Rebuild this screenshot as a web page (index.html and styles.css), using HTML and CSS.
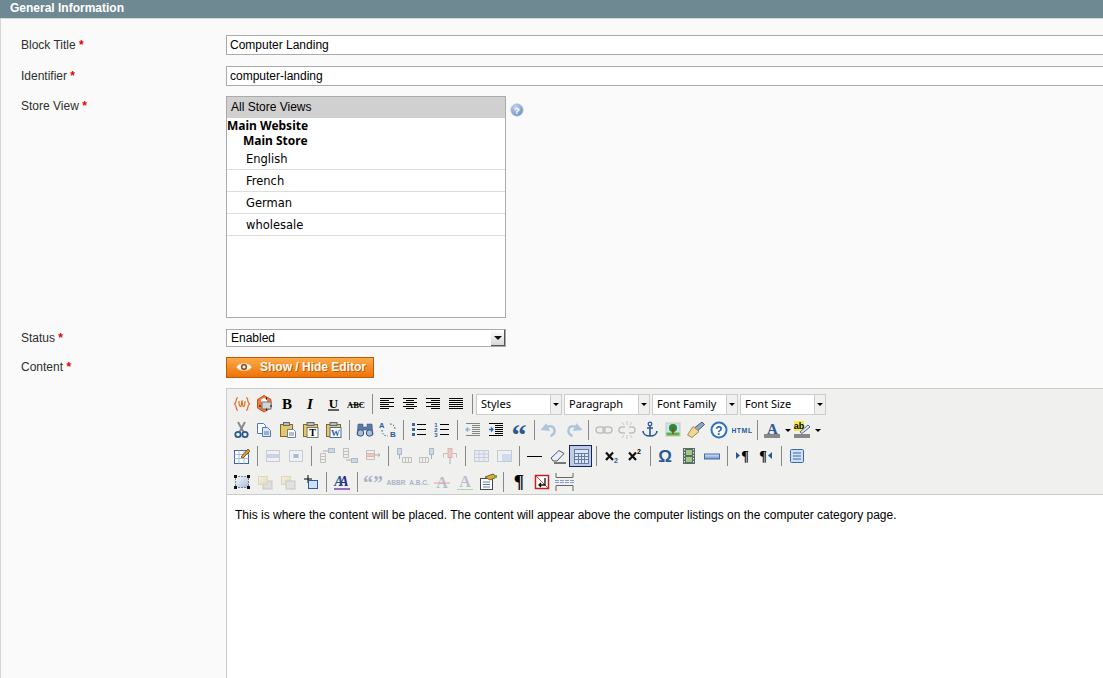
FILE: index.html
```html
<!DOCTYPE html>
<html lang="en">
<head>
    <meta charset="UTF-8">
    <meta name="viewport" content="width=device-width, initial-scale=1.0">
    <title>General Information</title>
    <link rel="stylesheet" href="styles.css">
</head>
<body>
    <svg class="defs" width="0" height="0">
        <defs>
            <linearGradient id="blueFill" x1="0" y1="0" x2="0" y2="1"><stop offset="0" stop-color="#dbe8f7"/><stop offset="1" stop-color="#6f94c8"/></linearGradient>
            <linearGradient id="layerFill" x1="0" y1="0" x2="1" y2="1"><stop offset="0" stop-color="#f8fafd"/><stop offset="1" stop-color="#a5bcdc"/></linearGradient>
            <linearGradient id="paleFill" x1="0" y1="0" x2="1" y2="1"><stop offset="0" stop-color="#f8f4df"/><stop offset="1" stop-color="#d9cfa4"/></linearGradient>
            <radialGradient id="helpFill" cx="0.4" cy="0.3" r="0.8"><stop offset="0" stop-color="#c8d8f0"/><stop offset="1" stop-color="#5f84bc"/></radialGradient>

            <!-- row 1 -->
            <symbol id="i-widget" viewBox="0 0 20 20"><path d="M6 3.500C3.500 3.500 5 8.500 2.500 10C5 11.500 3.500 16.500 6 16.500M14 3.500C16.500 3.500 15 8.500 17.500 10C15 11.500 16.500 16.500 14 16.500M7 7C7 10 7.800 12.500 8.600 12.500C9.500 12.500 9.500 8.500 10 6.500C10.500 8.500 10.500 12.500 11.400 12.500C12.200 12.500 13 10 13 7" fill="none" stroke="#e86a20" stroke-width="1.200"/></symbol>
            <symbol id="i-image-mage" viewBox="0 0 20 20"><path d="M9 1.500L16 5.500V14L9 18L2.500 14V5.500Z" fill="#ee7a3c" stroke="#c9521b"/><path d="M6 5.500L9 4L12 5.500V8H6Z" fill="#fff"/><rect x="7" y="8" width="9" height="7" fill="#cfd3da" stroke="#777"/><path d="M11.500 3.500v15M4 12h15" stroke="#111" stroke-width="1" stroke-dasharray="2 9"/></symbol>
            <symbol id="i-bold" viewBox="0 0 20 20"><text x="9" y="15" text-anchor="middle" class="ic-serif" font-size="15" font-weight="700">B</text></symbol>
            <symbol id="i-italic" viewBox="0 0 20 20"><text x="9" y="15" text-anchor="middle" class="ic-serif" font-size="15" font-weight="700" font-style="italic">I</text></symbol>
            <symbol id="i-underline" viewBox="0 0 20 20"><text x="9.500" y="14" text-anchor="middle" class="ic-serif" font-size="13" font-weight="700">U</text><path d="M4 16h11" stroke="#000" stroke-width="1.200"/></symbol>
            <symbol id="i-strike" viewBox="0 0 20 20"><text x="9" y="13.500" text-anchor="middle" class="ic-serif" font-size="8.500">ABC</text><path d="M2 10.500h14" stroke="#000" stroke-width=".7"/></symbol>
            <symbol id="i-left" viewBox="0 0 20 20"><path d="M2 4.500h14M2 6.500h9M2 8.500h14M2 10.500h9M2 12.500h14M2 14.500h9" stroke="#000"/></symbol>
            <symbol id="i-center" viewBox="0 0 20 20"><path d="M2 4.500h14M5 6.500h8M2 8.500h14M5 10.500h8M2 12.500h14M5 14.500h8" stroke="#000"/></symbol>
            <symbol id="i-right" viewBox="0 0 20 20"><path d="M2 4.500h14M7 6.500h9M2 8.500h14M7 10.500h9M2 12.500h14M7 14.500h9" stroke="#000"/></symbol>
            <symbol id="i-justify" viewBox="0 0 20 20"><path d="M2 4.500h14M2 6.500h14M2 8.500h14M2 10.500h14M2 12.500h14M2 14.500h14" stroke="#000"/></symbol>

            <!-- row 2 -->
            <symbol id="i-cut" viewBox="0 0 20 20"><path d="M6 2L11.500 12M13 2L7.500 12" stroke="#8a8a8a" stroke-width="2"/><circle cx="6" cy="14.500" r="2.700" fill="none" stroke="#2a5a94" stroke-width="1.800"/><circle cx="13" cy="14.500" r="2.700" fill="none" stroke="#2a5a94" stroke-width="1.800"/></symbol>
            <symbol id="i-copy" viewBox="0 0 20 20"><path d="M2.500 3.500h6l2 2v8h-8z" fill="#fff" stroke="#4d7ab5"/><path d="M7.500 7.500h5l3 3v6h-8z" fill="#dce8f6" stroke="#4d7ab5"/><path d="M9 12h5M9 14h5" stroke="#4d7ab5"/></symbol>
            <symbol id="i-paste" viewBox="0 0 20 20"><rect x="2.500" y="4.500" width="12" height="12" fill="#e6c868" stroke="#7c6a2c"/><rect x="5.500" y="2.500" width="6" height="3" fill="#bbb" stroke="#666"/><path d="M9.500 9.500h6l2 2v6h-8z" fill="#fff" stroke="#6a7f9e"/><path d="M11 13h5M11 15h5" stroke="#6a7f9e"/></symbol>
            <symbol id="i-paste-text" viewBox="0 0 20 20"><rect x="2.500" y="4.500" width="14" height="12" fill="#e6c868" stroke="#7c6a2c"/><rect x="6" y="2.500" width="7" height="3" fill="#bbb" stroke="#666"/><rect x="6" y="7.500" width="11" height="10" fill="#fff" stroke="#777"/><text x="11.500" y="16" text-anchor="middle" class="ic-serif" font-size="10" font-weight="700">T</text></symbol>
            <symbol id="i-paste-word" viewBox="0 0 20 20"><rect x="2.500" y="4.500" width="14" height="12" fill="#e6c868" stroke="#7c6a2c"/><rect x="6" y="2.500" width="7" height="3" fill="#bbb" stroke="#666"/><rect x="6" y="7.500" width="11" height="10" fill="#fff" stroke="#3d6cb0"/><text x="11.500" y="16" text-anchor="middle" class="ic-serif" font-size="9" font-weight="700" fill="#2a5a9e">W</text></symbol>
            <symbol id="i-search" viewBox="0 0 20 20"><path d="M3 4h5v3h4V4h5l1 11h-6V10H8v5H2z" fill="#5a7aa6" stroke="#33507a" stroke-width=".5"/><circle cx="5.500" cy="13" r="3.200" fill="#a8c0de" stroke="#33507a"/><circle cx="14.500" cy="13" r="3.200" fill="#a8c0de" stroke="#33507a"/></symbol>
            <symbol id="i-replace" viewBox="0 0 20 20"><text x="1" y="8" class="ic-sans" font-size="7.500" fill="#2e5c9a">A</text><text x="12" y="17" class="ic-sans" font-size="8" fill="#2e5c9a">B</text><path d="M4 10C4 14 6 16 10 16M12 4C15 4 17 6 17 9" fill="none" stroke="#2e5c9a" stroke-dasharray="1.500 1.500"/></symbol>
            <symbol id="i-bullist" viewBox="0 0 20 20"><path d="M8 4.500h9M8 9.500h9M8 14.500h9" stroke="#000"/><path d="M3 3h3v3H3zM3 8h3v3H3zM3 13h3v3H3z" fill="#3c68a8"/></symbol>
            <symbol id="i-numlist" viewBox="0 0 20 20"><path d="M8 4.500h9M8 9.500h9M8 14.500h9" stroke="#000"/><text x="4" y="7" text-anchor="middle" class="ic-sans" font-size="6" font-weight="700" fill="#2e5c9a">1</text><text x="4" y="12" text-anchor="middle" class="ic-sans" font-size="6" font-weight="700" fill="#2e5c9a">2</text><text x="4" y="17" text-anchor="middle" class="ic-sans" font-size="6" font-weight="700" fill="#2e5c9a">3</text></symbol>
            <symbol id="i-outdent" viewBox="0 0 20 20"><path d="M3 3.500h14M9 5.500h8M9 7.500h8M9 9.500h8M9 11.500h8M9 13.500h8M3 15.500h14" stroke="#000"/><path d="M7 9.500H3M5 7.500L3 9.500l2 2" fill="none" stroke="#2e6ab5" stroke-width="1.300"/></symbol>
            <symbol id="i-indent" viewBox="0 0 20 20"><path d="M3 3.500h14M9 5.500h8M9 7.500h8M9 9.500h8M9 11.500h8M9 13.500h8M3 15.500h14" stroke="#000"/><path d="M3 9.500h4M5 7.500l2 2-2 2" fill="none" stroke="#2e6ab5" stroke-width="1.300"/></symbol>
            <symbol id="i-quote" viewBox="0 0 20 20"><text x="10" y="25" text-anchor="middle" class="ic-serif" font-size="30" font-weight="700" fill="#2a5a94">“</text></symbol>
            <symbol id="i-undo" viewBox="0 0 20 20"><path d="M6 5.500L3 9l5 .500zM5.500 8C9 5 14 6 14.500 10C15 13 13 15 10.500 16" fill="none" stroke="#5f8fc8" stroke-width="2.500"/></symbol>
            <symbol id="i-redo" viewBox="0 0 20 20"><path d="M14 5.500L17 9l-5 .500zM14.500 8C11 5 6 6 5.500 10C5 13 7 15 9.500 16" fill="none" stroke="#5f8fc8" stroke-width="2.500"/></symbol>
            <symbol id="i-link" viewBox="0 0 20 20"><rect x="2" y="7" width="9" height="6" rx="3" fill="none" stroke="#888" stroke-width="1.500"/><rect x="9" y="7" width="9" height="6" rx="3" fill="none" stroke="#888" stroke-width="1.500"/></symbol>
            <symbol id="i-unlink" viewBox="0 0 20 20"><path d="M8 7H5a3 3 0 0 0 0 6h3M12 7h3a3 3 0 0 1 0 6h-3" fill="none" stroke="#888" stroke-width="1.500"/><path d="M10 1v4M10 15v4M5 2l2 3M15 2l-2 3M5 18l2-3M15 18l-2-3" stroke="#999"/></symbol>
            <symbol id="i-anchor" viewBox="0 0 20 20"><circle cx="10" cy="4" r="1.800" fill="none" stroke="#2a5a94" stroke-width="1.300"/><path d="M10 6v10M7 8h6M3 11c0 3 3 5 7 5s7-2 7-5" fill="none" stroke="#2a5a94" stroke-width="1.600"/></symbol>
            <symbol id="i-picture" viewBox="0 0 20 20"><rect x="3" y="3" width="14" height="13" fill="#c8e4f5" stroke="#c8c8b8"/><path d="M3.500 12.500h13v3h-13z" fill="#5fb040"/><circle cx="10" cy="8" r="4" fill="#2f8a2f"/><path d="M10 8v6" stroke="#7a4a20" stroke-width="1.500"/></symbol>
            <symbol id="i-cleanup" viewBox="0 0 20 20"><path d="M1.500 15L7 6.500L13 11.500L6 17.500Z" fill="#f0d890" stroke="#a08a50"/><path d="M9 7.500L16 2L18.500 4.500L12 10.500" fill="#8fa6c4" stroke="#445a7a"/></symbol>
            <symbol id="i-help" viewBox="0 0 20 20"><circle cx="10" cy="10" r="7.500" fill="#fff" stroke="#2e72c8" stroke-width="2"/><text x="10" y="14.500" text-anchor="middle" class="ic-sans" font-size="12" font-weight="700" fill="#2460ae">?</text></symbol>
            <symbol id="i-html" viewBox="0 0 20 20"><text x="10" y="13" text-anchor="middle" class="ic-sans" font-size="7" font-weight="700" fill="#2a5a94" letter-spacing=".5">HTML</text></symbol>
            <symbol id="i-forecolor" viewBox="0 0 20 20"><text x="9.500" y="13.500" text-anchor="middle" class="ic-serif" font-size="15" font-weight="700" fill="#2a5a94">A</text><rect x="1" y="14" width="16" height="4" fill="#888"/></symbol>
            <symbol id="i-backcolor" viewBox="0 0 20 20"><rect x="1" y="1" width="10" height="10" fill="#f2ea4e"/><text x="6" y="9" text-anchor="middle" class="ic-sans" font-size="9">ab</text><path d="M7 12L15 5L17 7L9 13.500Z" fill="#dfe8f4" stroke="#5a6a88"/><rect x="1" y="14" width="16" height="4" fill="#888"/></symbol>

            <!-- row 3 -->
            <symbol id="i-table-props" viewBox="0 0 20 20"><rect x="2.500" y="4.500" width="14" height="13" fill="#fff" stroke="#3c68a8"/><path d="M2.500 8.500h14M2.500 12.500h14M7 4.500v13M12 4.500v13" stroke="#a8bedc"/><path d="M9 11L16 3l2 2-7 7z" fill="#e09a40" stroke="#8a5a20"/></symbol>
            <symbol id="i-row-props" viewBox="0 0 20 20"><rect x="3.500" y="4.500" width="13" height="11" fill="#eef1f6" stroke="#b8c0ce"/><path d="M3.500 8h13v4h-13z" fill="#bcc9dc"/></symbol>
            <symbol id="i-cell-props" viewBox="0 0 20 20"><rect x="3.500" y="4.500" width="13" height="11" fill="#eef1f6" stroke="#b8c0ce"/><path d="M7.500 8h5v4h-5z" fill="#8fa6cc"/></symbol>
            <symbol id="i-row-before" viewBox="0 0 20 20"><path d="M3.500 7.500h5v3h-5zM3.500 10.500h5v3h-5zM3.500 13.500h5v3h-5z" fill="none" stroke="#b0b0b0"/><rect x="11.500" y="2.500" width="6" height="4" fill="#bcd0ea" stroke="#9ab"/><path d="M6 5h5" stroke="#999"/></symbol>
            <symbol id="i-row-after" viewBox="0 0 20 20"><path d="M3.500 2.500h5v3h-5zM3.500 5.500h5v3h-5zM3.500 8.500h5v3h-5z" fill="none" stroke="#b0b0b0"/><rect x="11.500" y="12.500" width="6" height="4" fill="#bcd0ea" stroke="#9ab"/><path d="M6 14h5" stroke="#999"/></symbol>
            <symbol id="i-row-delete" viewBox="0 0 20 20"><path d="M3.500 4.500h8v3h-8zM3.500 10.500h8v3h-8z" fill="none" stroke="#b0b0b0"/><rect x="3.500" y="7.500" width="8" height="3" fill="#f0b8b8" stroke="#d8a0a0"/><path d="M11 9h6M15 7.500L17 9l-2 1.500" fill="none" stroke="#999"/></symbol>
            <symbol id="i-col-before" viewBox="0 0 20 20"><path d="M8.500 11.500v5h3v-5zM11.500 11.500v5h3v-5zM14.500 11.500v5h3v-5z" fill="none" stroke="#b0b0b0"/><rect x="3.500" y="2.500" width="4" height="6" fill="#bcd0ea" stroke="#9ab"/><path d="M5.500 8v5" stroke="#999"/></symbol>
            <symbol id="i-col-after" viewBox="0 0 20 20"><path d="M2.500 11.500v5h3v-5zM5.500 11.500v5h3v-5zM8.500 11.500v5h3v-5z" fill="none" stroke="#b0b0b0"/><rect x="12.500" y="2.500" width="4" height="6" fill="#bcd0ea" stroke="#9ab"/><path d="M14.500 8v5" stroke="#999"/></symbol>
            <symbol id="i-col-delete" viewBox="0 0 20 20"><path d="M3.500 7.500h13M3.500 7.500v4M16.500 7.500v4" fill="none" stroke="#b0b0b0"/><rect x="8" y="2.500" width="4" height="9" fill="#f0b8b8" stroke="#d8a0a0"/><path d="M10 11v7" stroke="#999"/></symbol>
            <symbol id="i-split" viewBox="0 0 20 20"><rect x="3.500" y="4.500" width="14" height="11" fill="#e6ebf4" stroke="#b8c0ce"/><path d="M3.500 8h14M3.500 11.500h14M8 4.500v11M13 4.500v11" stroke="#b8c4d8"/></symbol>
            <symbol id="i-merge" viewBox="0 0 20 20"><rect x="3.500" y="4.500" width="14" height="11" fill="#eef1f6" stroke="#b8c0ce"/><path d="M8 8h9v7H8z" fill="#c4d4ec"/></symbol>
            <symbol id="i-hr" viewBox="0 0 20 20"><path d="M2 10.500h15" stroke="#000"/></symbol>
            <symbol id="i-eraser" viewBox="0 0 20 20"><path d="M3 12L11 4.500l5 3L9 15H5z" fill="#e8eef6" stroke="#4a5a70"/><path d="M6 17h12" stroke="#000"/></symbol>
            <symbol id="i-table" viewBox="0 0 20 20"><rect x="3.500" y="3.500" width="14" height="14" fill="#dfe6f0" stroke="#5f80ad"/><path d="M3.500 7.500h14M3.500 10.500h14M3.500 13.500h14M7.500 7.500v10M10.500 7.500v10M13.500 7.500v10" stroke="#5f80ad"/></symbol>
            <symbol id="i-sub" viewBox="0 0 20 20"><path d="M4 6.500L11 14M11 6.500L4 14" stroke="#111" stroke-width="2.200"/><text x="12" y="17" class="ic-sans" font-size="7" font-weight="700" fill="#2a5a94">2</text></symbol>
            <symbol id="i-sup" viewBox="0 0 20 20"><path d="M4 6.500L11 14M11 6.500L4 14" stroke="#111" stroke-width="2.200"/><text x="12" y="8" class="ic-sans" font-size="7" font-weight="700">2</text></symbol>
            <symbol id="i-omega" viewBox="0 0 20 20"><text x="9" y="16" text-anchor="middle" class="ic-sans" font-size="17" font-weight="700" fill="#2a5a94">Ω</text></symbol>
            <symbol id="i-media" viewBox="0 0 20 20"><rect x="4" y="2" width="12" height="16" fill="#5a6a65"/><rect x="7" y="4" width="6" height="5" fill="#9ccc80"/><rect x="7" y="11" width="6" height="5" fill="#9ccc80"/><path d="M5.500 3v14M14.500 3v14" stroke="#dde" stroke-dasharray="1.500 1.500"/></symbol>
            <symbol id="i-bar" viewBox="0 0 20 20"><rect x="2.500" y="8" width="15" height="5" fill="url(#blueFill)" stroke="#456ea8"/></symbol>
            <symbol id="i-ltr" viewBox="0 0 20 20"><path d="M3 6v7l4-3.500z" fill="#2a5a94"/><text x="12" y="14.500" text-anchor="middle" class="ic-serif" font-size="14" font-weight="700">¶</text></symbol>
            <symbol id="i-rtl" viewBox="0 0 20 20"><path d="M16 6v7l-4-3.500z" fill="#2a5a94"/><text x="7" y="14.500" text-anchor="middle" class="ic-serif" font-size="14" font-weight="700">¶</text></symbol>
            <symbol id="i-full" viewBox="0 0 20 20"><rect x="3.500" y="3.500" width="13" height="13" rx="1" fill="#cfe0f5" stroke="#3c68a8"/><path d="M6 7h8M6 10h8M6 13h8" stroke="#3c68a8"/></symbol>

            <!-- row 4 -->
            <symbol id="i-layer" viewBox="0 0 20 20"><rect x="3.500" y="4.500" width="13" height="11" fill="url(#layerFill)"/><path d="M3.500 4.500h13v11h-13z" fill="none" stroke="#222" stroke-dasharray="1 2"/><path d="M2 3h3v3H2zM15 3h3v3h-3zM2 14h3v3H2zM15 14h3v3h-3z" fill="#111"/></symbol>
            <symbol id="i-front" viewBox="0 0 20 20"><rect x="8" y="9" width="9" height="8" fill="#d8d8d8" stroke="#bbb"/><rect x="3.500" y="4.500" width="9" height="8" fill="url(#paleFill)" stroke="#d8cfa8"/></symbol>
            <symbol id="i-back" viewBox="0 0 20 20"><rect x="3.500" y="4.500" width="9" height="8" fill="url(#paleFill)" stroke="#d8cfa8"/><rect x="8" y="9" width="9" height="8" fill="#dcdcdc" stroke="#bbb"/></symbol>
            <symbol id="i-absolute" viewBox="0 0 20 20"><path d="M7 3v8M3 7h8" stroke="#000"/><rect x="7.500" y="8.500" width="9" height="8" fill="#cfe0f5" stroke="#2e5c9a"/></symbol>
            <symbol id="i-styles" viewBox="0 0 20 20"><text x="7" y="14" text-anchor="middle" class="ic-serif" font-size="14" font-weight="700" font-style="italic" fill="#2a5a94">A</text><text x="12" y="14" text-anchor="middle" class="ic-serif" font-size="14" font-weight="700" font-style="italic" fill="#2a2a80">A</text><path d="M2 17h16" stroke="#7a3fb0" stroke-width="1.500"/></symbol>
            <symbol id="i-cite" viewBox="0 0 20 20"><text x="10" y="18" text-anchor="middle" class="ic-serif" font-size="20" font-weight="700" fill="#aab4c8">“”</text></symbol>
            <symbol id="i-abbr" viewBox="0 0 20 20"><text x="10" y="13" text-anchor="middle" class="ic-sans" font-size="6.500" font-weight="700" fill="#aab4c8">ABBR</text></symbol>
            <symbol id="i-acronym" viewBox="0 0 20 20"><text x="10" y="13" text-anchor="middle" class="ic-sans" font-size="6.500" font-weight="700" fill="#aab4c8">A.B.C.</text></symbol>
            <symbol id="i-del" viewBox="0 0 20 20"><text x="10" y="16" text-anchor="middle" class="ic-serif" font-size="16" font-weight="700" fill="#b8bfcc">A</text><path d="M2 11h16" stroke="#e8a0a0"/></symbol>
            <symbol id="i-ins" viewBox="0 0 20 20"><text x="10" y="15" text-anchor="middle" class="ic-serif" font-size="16" font-weight="700" fill="#b8bfcc">A</text><path d="M2 17.500h16" stroke="#a8d8a8"/></symbol>
            <symbol id="i-attribs" viewBox="0 0 20 20"><rect x="2.500" y="6.500" width="12" height="11" fill="#fff" stroke="#445"/><path d="M5 10h7M5 12.500h7M5 15h7" stroke="#5f80ad"/><path d="M7 5L15 2l4 3-7 3z" fill="#d8a83c" stroke="#806020"/><path d="M16 3h3v3h-3z" fill="#5fb040"/></symbol>
            <symbol id="i-para" viewBox="0 0 20 20"><text x="10" y="16" text-anchor="middle" class="ic-serif" font-size="19" font-weight="700">¶</text></symbol>
            <symbol id="i-nbsp" viewBox="0 0 20 20"><rect x="3.500" y="3.500" width="13" height="13" fill="#fff" stroke="#c02020" stroke-width="1.500"/><path d="M4 4L16 16" stroke="#d04040"/><path d="M13 6v7H7M9 11l-2 2 2 2" fill="none" stroke="#111" stroke-width="1.300"/></symbol>
            <symbol id="i-pagebreak" viewBox="0 0 20 20"><path d="M1 1v4.500h17V1M1 19v-5.500h17V19" fill="none" stroke="#666"/><path d="M0 8.500h19M0 10.500h19" stroke="#7fa0cc" stroke-dasharray="4 1"/></symbol>

            <symbol id="i-eye" viewBox="0 0 20 14"><path d="M1 7C5 1 15 1 19 7C15 13 5 13 1 7Z" fill="#fff"/><circle cx="10" cy="7" r="3.700" fill="#a8501a"/><circle cx="10" cy="7" r="1.700" fill="#fff"/></symbol>
        </defs>
    </svg>

    <h2 class="head">General Information</h2>
    <div class="panel">
        <div class="row row-first">
            <label class="label">Block Title <span class="req">*</span></label>
            <input class="text" type="text" value="Computer Landing">
        </div>
        <div class="row row-second">
            <label class="label">Identifier <span class="req">*</span></label>
            <input class="text" type="text" value="computer-landing">
        </div>
        <div class="row row-store">
            <label class="label">Store View <span class="req">*</span></label>
            <div class="listbox">
                <div class="opt-all">All Store Views</div>
                <div class="opt-site">Main Website</div>
                <div class="opt-group">Main Store</div>
                <div class="opt">English</div>
                <div class="opt">French</div>
                <div class="opt">German</div>
                <div class="opt">wholesale</div>
            </div>
            <svg class="hint" width="14" height="14" viewBox="0 0 16 16"><circle cx="8" cy="8" r="7" fill="url(#helpFill)" stroke="#a9c0e0"/><text x="8" y="12" text-anchor="middle" class="ic-sans" font-size="11" font-weight="700" fill="#fff">?</text></svg>
        </div>
        <div class="row row-status">
            <label class="label">Status <span class="req">*</span></label>
            <div class="dropdown"><span>Enabled</span><i class="drop-btn"></i></div>
        </div>
        <div class="row row-content">
            <label class="label">Content <span class="req">*</span></label>
            <button class="toggle" type="button"><svg class="eye"><use href="#i-eye"/></svg><span>Show / Hide Editor</span></button>
        </div>
        <div class="editor">
            <div class="toolbar">
                <div class="tb-row">
                    <b class="btn"><svg class="ic"><use href="#i-widget"/></svg></b>
                    <b class="btn"><svg class="ic"><use href="#i-image-mage"/></svg></b>
                    <b class="btn"><svg class="ic"><use href="#i-bold"/></svg></b>
                    <b class="btn"><svg class="ic"><use href="#i-italic"/></svg></b>
                    <b class="btn"><svg class="ic"><use href="#i-underline"/></svg></b>
                    <b class="btn"><svg class="ic"><use href="#i-strike"/></svg></b>
                    <i class="sep"></i>
                    <b class="btn"><svg class="ic"><use href="#i-left"/></svg></b>
                    <b class="btn"><svg class="ic"><use href="#i-center"/></svg></b>
                    <b class="btn"><svg class="ic"><use href="#i-right"/></svg></b>
                    <b class="btn"><svg class="ic"><use href="#i-justify"/></svg></b>
                    <i class="sep"></i>
                    <div class="tb-select"><span>Styles</span><i></i></div>
                    <div class="tb-select"><span>Paragraph</span><i></i></div>
                    <div class="tb-select"><span>Font Family</span><i></i></div>
                    <div class="tb-select"><span>Font Size</span><i></i></div>
                </div>
                <div class="tb-row">
                    <b class="btn"><svg class="ic"><use href="#i-cut"/></svg></b>
                    <b class="btn"><svg class="ic"><use href="#i-copy"/></svg></b>
                    <b class="btn"><svg class="ic"><use href="#i-paste"/></svg></b>
                    <b class="btn"><svg class="ic"><use href="#i-paste-text"/></svg></b>
                    <b class="btn"><svg class="ic"><use href="#i-paste-word"/></svg></b>
                    <i class="sep"></i>
                    <b class="btn"><svg class="ic"><use href="#i-search"/></svg></b>
                    <b class="btn"><svg class="ic"><use href="#i-replace"/></svg></b>
                    <i class="sep"></i>
                    <b class="btn"><svg class="ic"><use href="#i-bullist"/></svg></b>
                    <b class="btn"><svg class="ic"><use href="#i-numlist"/></svg></b>
                    <i class="sep"></i>
                    <b class="btn off"><svg class="ic"><use href="#i-outdent"/></svg></b>
                    <b class="btn"><svg class="ic"><use href="#i-indent"/></svg></b>
                    <b class="btn"><svg class="ic"><use href="#i-quote"/></svg></b>
                    <i class="sep"></i>
                    <b class="btn off"><svg class="ic"><use href="#i-undo"/></svg></b>
                    <b class="btn off"><svg class="ic"><use href="#i-redo"/></svg></b>
                    <i class="sep"></i>
                    <b class="btn off"><svg class="ic"><use href="#i-link"/></svg></b>
                    <b class="btn off"><svg class="ic"><use href="#i-unlink"/></svg></b>
                    <b class="btn"><svg class="ic"><use href="#i-anchor"/></svg></b>
                    <b class="btn"><svg class="ic"><use href="#i-picture"/></svg></b>
                    <b class="btn"><svg class="ic"><use href="#i-cleanup"/></svg></b>
                    <b class="btn"><svg class="ic"><use href="#i-help"/></svg></b>
                    <b class="btn"><svg class="ic"><use href="#i-html"/></svg></b>
                    <i class="sep"></i>
                    <b class="btn"><svg class="ic"><use href="#i-forecolor"/></svg></b>
                    <i class="caret"></i>
                    <b class="btn"><svg class="ic"><use href="#i-backcolor"/></svg></b>
                    <i class="caret"></i>
                </div>
                <div class="tb-row">
                    <b class="btn"><svg class="ic"><use href="#i-table-props"/></svg></b>
                    <i class="sep"></i>
                    <b class="btn dim"><svg class="ic"><use href="#i-row-props"/></svg></b>
                    <b class="btn dim"><svg class="ic"><use href="#i-cell-props"/></svg></b>
                    <i class="sep"></i>
                    <b class="btn dim"><svg class="ic"><use href="#i-row-before"/></svg></b>
                    <b class="btn dim"><svg class="ic"><use href="#i-row-after"/></svg></b>
                    <b class="btn dim"><svg class="ic"><use href="#i-row-delete"/></svg></b>
                    <i class="sep"></i>
                    <b class="btn dim"><svg class="ic"><use href="#i-col-before"/></svg></b>
                    <b class="btn dim"><svg class="ic"><use href="#i-col-after"/></svg></b>
                    <b class="btn dim"><svg class="ic"><use href="#i-col-delete"/></svg></b>
                    <i class="sep"></i>
                    <b class="btn dim"><svg class="ic"><use href="#i-split"/></svg></b>
                    <b class="btn dim"><svg class="ic"><use href="#i-merge"/></svg></b>
                    <i class="sep"></i>
                    <b class="btn"><svg class="ic"><use href="#i-hr"/></svg></b>
                    <b class="btn"><svg class="ic"><use href="#i-eraser"/></svg></b>
                    <b class="btn active"><svg class="ic"><use href="#i-table"/></svg></b>
                    <i class="sep"></i>
                    <b class="btn"><svg class="ic"><use href="#i-sub"/></svg></b>
                    <b class="btn"><svg class="ic"><use href="#i-sup"/></svg></b>
                    <i class="sep"></i>
                    <b class="btn"><svg class="ic"><use href="#i-omega"/></svg></b>
                    <b class="btn"><svg class="ic"><use href="#i-media"/></svg></b>
                    <b class="btn"><svg class="ic"><use href="#i-bar"/></svg></b>
                    <i class="sep"></i>
                    <b class="btn"><svg class="ic"><use href="#i-ltr"/></svg></b>
                    <b class="btn"><svg class="ic"><use href="#i-rtl"/></svg></b>
                    <i class="sep"></i>
                    <b class="btn"><svg class="ic"><use href="#i-full"/></svg></b>
                </div>
                <div class="tb-row">
                    <b class="btn"><svg class="ic"><use href="#i-layer"/></svg></b>
                    <b class="btn dim"><svg class="ic"><use href="#i-front"/></svg></b>
                    <b class="btn dim"><svg class="ic"><use href="#i-back"/></svg></b>
                    <b class="btn"><svg class="ic"><use href="#i-absolute"/></svg></b>
                    <i class="sep"></i>
                    <b class="btn"><svg class="ic"><use href="#i-styles"/></svg></b>
                    <i class="sep"></i>
                    <b class="btn"><svg class="ic"><use href="#i-cite"/></svg></b>
                    <b class="btn"><svg class="ic"><use href="#i-abbr"/></svg></b>
                    <b class="btn"><svg class="ic"><use href="#i-acronym"/></svg></b>
                    <b class="btn"><svg class="ic"><use href="#i-del"/></svg></b>
                    <b class="btn"><svg class="ic"><use href="#i-ins"/></svg></b>
                    <b class="btn"><svg class="ic"><use href="#i-attribs"/></svg></b>
                    <i class="sep"></i>
                    <b class="btn"><svg class="ic"><use href="#i-para"/></svg></b>
                    <b class="btn"><svg class="ic"><use href="#i-nbsp"/></svg></b>
                    <b class="btn"><svg class="ic"><use href="#i-pagebreak"/></svg></b>
                </div>
            </div>
            <div class="content-area">This is where the content will be placed. The content will appear above the computer listings on the computer category page.</div>
        </div>
    </div>
</body>
</html>
```

FILE: styles.css
```css
html, body {
    margin: 0;
    height: 100%;
    overflow: hidden;
}
body {
    display: flex;
    flex-direction: column;
    font-family: "Liberation Sans", Arial, sans-serif;
    font-size: 12px;
    color: #2f2f2f;
    background-color: #fafafa;
}
.defs {
    position: absolute;
}
.ic-serif {
    font-family: "Liberation Serif", serif;
}
.ic-sans {
    font-family: "Liberation Sans", sans-serif;
}
.head {
    margin: 0;
    height: 18px;
    padding-left: 10px;
    font-size: 12px;
    line-height: 16px;
    font-weight: bold;
    color: #fff;
    background-color: #6f8992;
    border-bottom: 1px solid #cfd9dc;
}
.panel {
    flex: 1;
    min-height: 0;
    display: flex;
    flex-direction: column;
    padding: 16px 0 0 20px;
    border-left: 1px solid #d6d6d6;
}
.row {
    display: flex;
    align-items: flex-start;
}
.row-first {
    margin-bottom: 11px;
}
.row-second {
    margin-bottom: 10px;
}
.row-store {
    margin-bottom: 11px;
}
.row-status {
    margin-bottom: 10px;
}
.row-content {
    margin-bottom: 10px;
}
.label {
    flex: 0 0 205px;
    padding-top: 1px;
    line-height: 18px;
}
.row-status .label {
    padding-top: 0;
}
.req {
    font-weight: bold;
    color: #e00000;
}
.text {
    flex: 1;
    min-width: 0;
    height: 20px;
    box-sizing: border-box;
    padding: 0 3px;
    font: 12px "Liberation Sans", Arial, sans-serif;
    color: #000;
    background-color: #fff;
    border: 1px solid #aaa;
    border-right: 0;
    border-radius: 0;
    outline: none;
}
.listbox {
    width: 280px;
    height: 222px;
    box-sizing: border-box;
    background-color: #fff;
    border: 1px solid #aaa;
    color: #000;
    font-family: "DejaVu Sans", sans-serif;
    font-size: 11.5px;
}
.opt-all {
    height: 21px;
    padding-left: 4px;
    font: 12px/21px "Liberation Sans", Arial, sans-serif;
    background-color: #d0d0d0;
}
.opt-site {
    height: 15px;
    font-family: "Noto Sans", sans-serif;
    font-size: 12px;
    line-height: 16px;
    font-weight: bold;
}
.opt-group {
    padding-left: 16px;
    height: 15px;
    font-family: "Noto Sans", sans-serif;
    font-size: 12px;
    line-height: 16px;
    font-weight: bold;
}
.opt {
    height: 21px;
    line-height: 22px;
    padding-left: 19px;
    border-bottom: 1px solid #ddd;
}
.hint {
    margin: 7px 0 0 4px;
}
.dropdown {
    width: 280px;
    height: 18px;
    box-sizing: border-box;
    display: flex;
    justify-content: space-between;
    padding-left: 4px;
    line-height: 16px;
    color: #000;
    background-color: #fff;
    border: 1px solid #aaa;
}
.drop-btn {
    width: 14px;
    height: 16px;
    position: relative;
    background: linear-gradient(#fff, #d8d8d8);
    border-right: 1px solid #555;
    border-bottom: 1px solid #555;
    box-sizing: border-box;
}
.drop-btn::after {
    content: "";
    position: absolute;
    left: 3px;
    top: 6px;
    border: 4px solid transparent;
    border-top: 4px solid #111;
    border-bottom: 0;
}
.toggle {
    display: flex;
    align-items: center;
    width: 148px;
    height: 21px;
    padding: 0 0 1px 8px;
    box-sizing: border-box;
    font: bold 12px "Liberation Sans", Arial, sans-serif;
    color: #fff;
    text-shadow: 1px 1px 0 #c25a00;
    background: linear-gradient(#fbab4a, #ee7205);
    border: 1px solid #bf5a08;
    border-radius: 0;
}
.eye {
    width: 18px;
    height: 12px;
    margin-right: 7px;
}
.editor {
    flex: 1;
    min-height: 0;
    display: flex;
    flex-direction: column;
    margin-left: 205px;
    border-left: 1px solid #ccc;
    border-top: 1px solid #ccc;
}
.toolbar {
    padding: 2px 0 0 3px;
    height: 103px;
    background-color: #f0f0ee;
    border-bottom: 1px solid #ccc;
}
.tb-row {
    display: flex;
    align-items: center;
    height: 26px;
}
.btn {
    flex: 0 0 23px;
    height: 22px;
    display: flex;
    align-items: center;
    justify-content: center;
}
.btn.off .ic {
    opacity: 0.45;
}
.btn.dim .ic {
    opacity: 0.75;
}
.btn.active {
    box-sizing: border-box;
    background-color: #c2cbe0;
    border: 1px solid #0a246a;
}
.ic {
    width: 20px;
    height: 20px;
}
.sep {
    flex: 0 0 8px;
    height: 20px;
    background: linear-gradient(#888, #888) center / 1px 100% no-repeat;
}
.caret {
    flex: none;
    margin: 0 .5px;
    border-left: 3px solid transparent;
    border-right: 3px solid transparent;
    border-top: 3px solid #000;
}
.tb-select {
    flex: 0 0 86px;
    height: 21px;
    box-sizing: border-box;
    display: flex;
    justify-content: space-between;
    margin-right: 2px;
    padding-left: 4px;
    line-height: 17px;
    font-family: "Noto Sans", sans-serif;
    font-size: 11px;
    color: #000;
    background-color: #fff;
    border: 1px solid #ccc;
}
.tb-select i {
    flex: 0 0 10px;
    height: 19px;
    border-left: 1px solid #ccc;
    background-color: #f0f0ee;
    position: relative;
}
.tb-select i::after {
    content: "";
    position: absolute;
    left: 2px;
    top: 8px;
    border-left: 3px solid transparent;
    border-right: 3px solid transparent;
    border-top: 3px solid #000;
}
.content-area {
    flex: 1;
    padding: 13px 8px 0;
    font-size: 12px;
    color: #000;
    background-color: #fff;
}
```
